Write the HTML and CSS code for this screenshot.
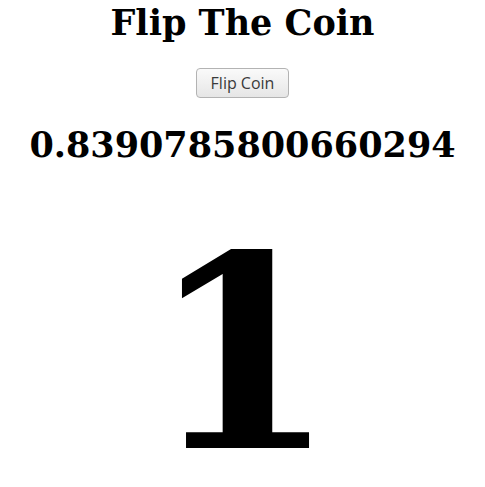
FILE: index.html
```html
<!DOCTYPE html>
<html>
<head>
<meta charset="utf-8">
<title>Flip The Coin</title>
<link rel="stylesheet" href="styles.css">
</head>
<body>
<main class="page">
  <h1 class="title">Flip The Coin</h1>
  <button class="flip-btn" type="button">Flip Coin</button>
  <h1 class="random">0.8390785800660294</h1>
  <div class="result">1</div>
</main>
</body>
</html>
```
FILE: styles.css
```css
html, body {
  margin: 0;
  padding: 0;
  background: #ffffff;
}
.page {
  display: flex;
  flex-direction: column;
  align-items: center;
  font-family: "DejaVu Serif", serif;
  color: #000;
}
.title {
  margin: 0;
  font-size: 35px;
  line-height: 46px;
  font-weight: bold;
}
.flip-btn {
  margin-top: 22px;
  width: 93px;
  height: 30px;
  border: 1px solid #b3b3b3;
  border-radius: 4px;
  background: linear-gradient(#fafafa, #e6e6e6);
  font-family: "Open Sans", "DejaVu Sans", sans-serif;
  font-size: 16px;
  color: #3a3a3a;
  padding: 0;
}
.random {
  margin: 27px 0 0;
  font-size: 35px;
  line-height: 40px;
  font-weight: bold;
}
.result {
  margin-top: 74px;
  font-size: 268px;
  line-height: 230px;
  font-weight: bold;
}
```
